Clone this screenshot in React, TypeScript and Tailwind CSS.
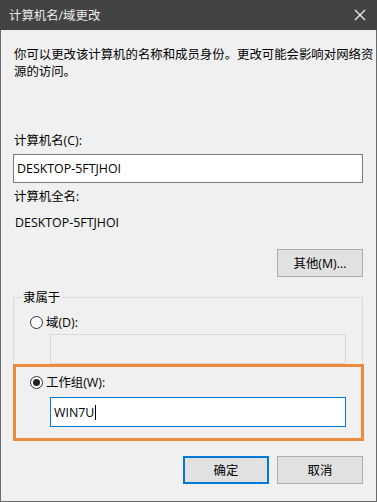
import React from 'react';

const font = { fontFamily: '"Open Sans", "Noto Sans CJK SC", sans-serif' };

const Radio: React.FC<{ checked?: boolean }> = ({ checked }) => (
  <span className="flex h-[13px] w-[13px] items-center justify-center rounded-full border border-[#333] bg-white">
    {checked && <span className="h-[7px] w-[7px] rounded-full bg-[#222]" />}
  </span>
);

const App: React.FC = () => {
  return (
    <div
      className="flex h-[502px] w-[377px] flex-col border-x border-b border-[#6a6a6a] bg-[#f0f0f0] text-[12.4px] leading-[17px] text-black"
      style={font}
    >
      {/* Title bar */}
      <div className="-mx-px flex h-[30px] shrink-0 items-center justify-between bg-[#434343] pl-[9px] pr-[10px] text-[#ececec]">
        <span>计算机名/域更改</span>
        <svg width="12" height="12" viewBox="0 0 12 12" className="mr-[1px]">
          <path d="M1 1 L11 11 M11 1 L1 11" stroke="#f2f2f2" strokeWidth="1.2" fill="none" />
        </svg>
      </div>

      <div className="flex flex-col pl-[12px] pr-[13px]">
        <p className="mt-[16px] whitespace-nowrap pl-[1px]">
          你可以更改该计算机的名称和成员身份。更改可能会影响对网络资
          <br />
          源的访问。
        </p>

        <div className="mt-[52px] pl-[1px]">计算机名(C):</div>
        <div className="mt-[5px] flex h-[29px] items-center border border-[#7a7a7a] bg-white pl-[3px]">
          DESKTOP-5FTJHOI
        </div>

        <div className="mt-[5px] pl-[1px]">计算机全名:</div>
        <div className="mt-[9px] pl-[2px]">DESKTOP-5FTJHOI</div>

        <div className="mt-[18px] flex justify-end">
          <button className="h-[28px] w-[86px] border border-[#adadad] bg-[#e1e1e1]">其他(M)...</button>
        </div>

        {/* Group box */}
        <div className="relative mt-[20px] border border-[#dcdcdc] pb-[11px]">
          <span className="-mt-[9px] ml-[7px] block w-fit bg-[#f0f0f0] px-[2px]">隶属于</span>

          <div className="mt-[8px] ml-[16px] flex items-center gap-[3px]">
            <Radio />
            <span>域(D):</span>
          </div>
          <div className="mt-[3px] ml-[36px] h-[30px] w-[296px] border border-[#d9d9d9] bg-[#f0f0f0]" />

          <div className="mt-[10px] ml-[16px] flex items-center gap-[3px]">
            <Radio checked />
            <span>工作组(W):</span>
          </div>
          <div className="mt-[6px] ml-[36px] flex h-[30px] w-[296px] items-center border border-[#0078d7] bg-white pl-[3px]">
            WIN7U
            <span className="ml-[1px] inline-block h-[15px] w-px bg-black" />
          </div>

          {/* highlight annotation */}
          <div className="absolute left-[-1px] top-[66px] h-[77px] w-[351px] border-[3px] border-[#ec8a3e]" />
        </div>

        <div className="mt-[17px] flex justify-end gap-[8px]">
          <button className="h-[28px] w-[86px] border-2 border-[#0078d7] bg-[#e1e1e1]">确定</button>
          <button className="h-[28px] w-[86px] border border-[#adadad] bg-[#e1e1e1]">取消</button>
        </div>
      </div>
    </div>
  );
};

export default App;
